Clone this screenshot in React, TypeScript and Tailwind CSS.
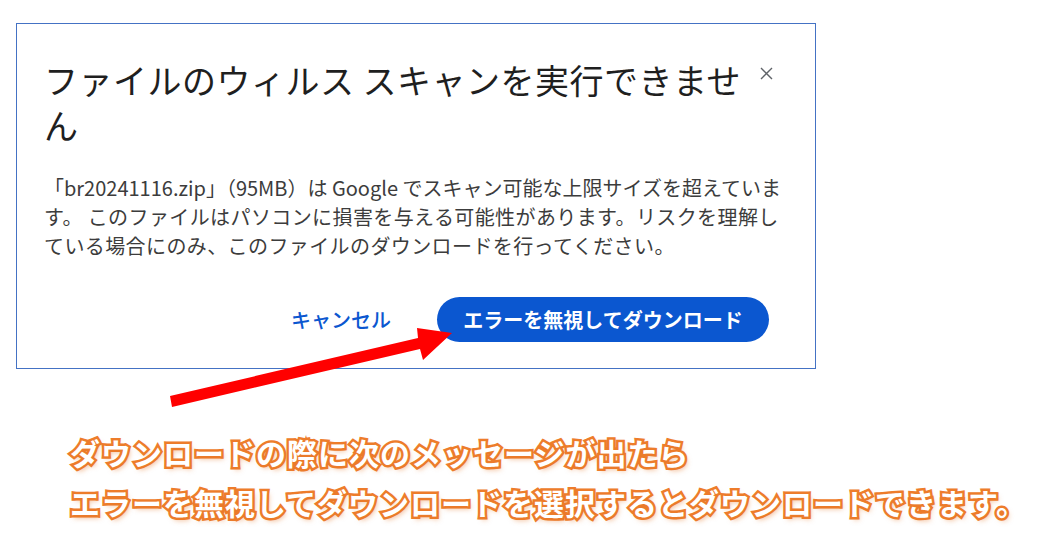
import React from "react";

const jp = "font-['Noto_Sans_CJK_JP','Noto_Sans',sans-serif]";

export default function App() {
  return (
    <div className={`relative w-[1043px] h-[551px] bg-white overflow-hidden ${jp}`}>
      <div className="pt-[23px] pl-[16px]">
        <div className="w-[800px] h-[346px] border border-[#4472c4] pt-[33px] pl-[27px] pr-[28px] flex flex-col">
          <div className="flex items-start">
            <h1 className="w-[714px] text-[34px] leading-[45px] tracking-[0.5px] text-[#1f1f1f] font-normal">
              <span className="block whitespace-nowrap">ファイルのウィルス スキャンを実行できませ</span>
              <span className="block">ん</span>
            </h1>
            <div className="mt-[9px] ml-[1px] w-[14px] h-[14px] flex items-center justify-center">
              <svg width="13" height="13" viewBox="0 0 13 13">
                <path d="M1 1 L12 12 M12 1 L1 12" stroke="#5f6368" strokeWidth="1.4" fill="none" />
              </svg>
            </div>
          </div>
          <div className="mt-[26px] text-[20px] leading-[29px] text-[#3c3c3c] tracking-[0.4px]">
            <span className="block whitespace-nowrap tracking-[0px]">「br20241116.zip」（95MB）は Google でスキャン可能な上限サイズを超えていま</span>
            <span className="block whitespace-nowrap">す。 このファイルはパソコンに損害を与える可能性があります。リスクを理解し</span>
            <span className="block whitespace-nowrap">ている場合にのみ、このファイルのダウンロードを行ってください。</span>
          </div>
          <div className="mt-[37px] flex justify-end items-center pr-[18px] gap-[46px]">
            <button className="text-[20px] font-medium text-[#0b57d0] h-[45px]">キャンセル</button>
            <button className="h-[45px] w-[332px] rounded-full bg-[#0b57d0] text-white text-[20px] font-bold flex items-center justify-center">
              エラーを無視してダウンロード
            </button>
          </div>
        </div>
      </div>
      <div className="mt-[58px] pl-[70px] text-[30px] leading-[50px] font-bold tracking-[1px] text-white [-webkit-text-stroke:5px_#ee7d2c] [paint-order:stroke_fill] [text-shadow:2px_3px_5px_rgba(230,120,40,0.5)]">
        <div className="whitespace-nowrap">ダウンロードの際に次のメッセージが出たら</div>
        <div className="whitespace-nowrap">エラーを無視してダウンロードを選択するとダウンロードできます。</div>
      </div>
      <svg className="absolute top-0 left-0 pointer-events-none" width="1043" height="551" viewBox="0 0 1043 551">
        <polygon
          points="170,396 418,338 417,328 452,333 423,360 420,349 172,407"
          fill="#ff0000"
        />
      </svg>
    </div>
  );
}
